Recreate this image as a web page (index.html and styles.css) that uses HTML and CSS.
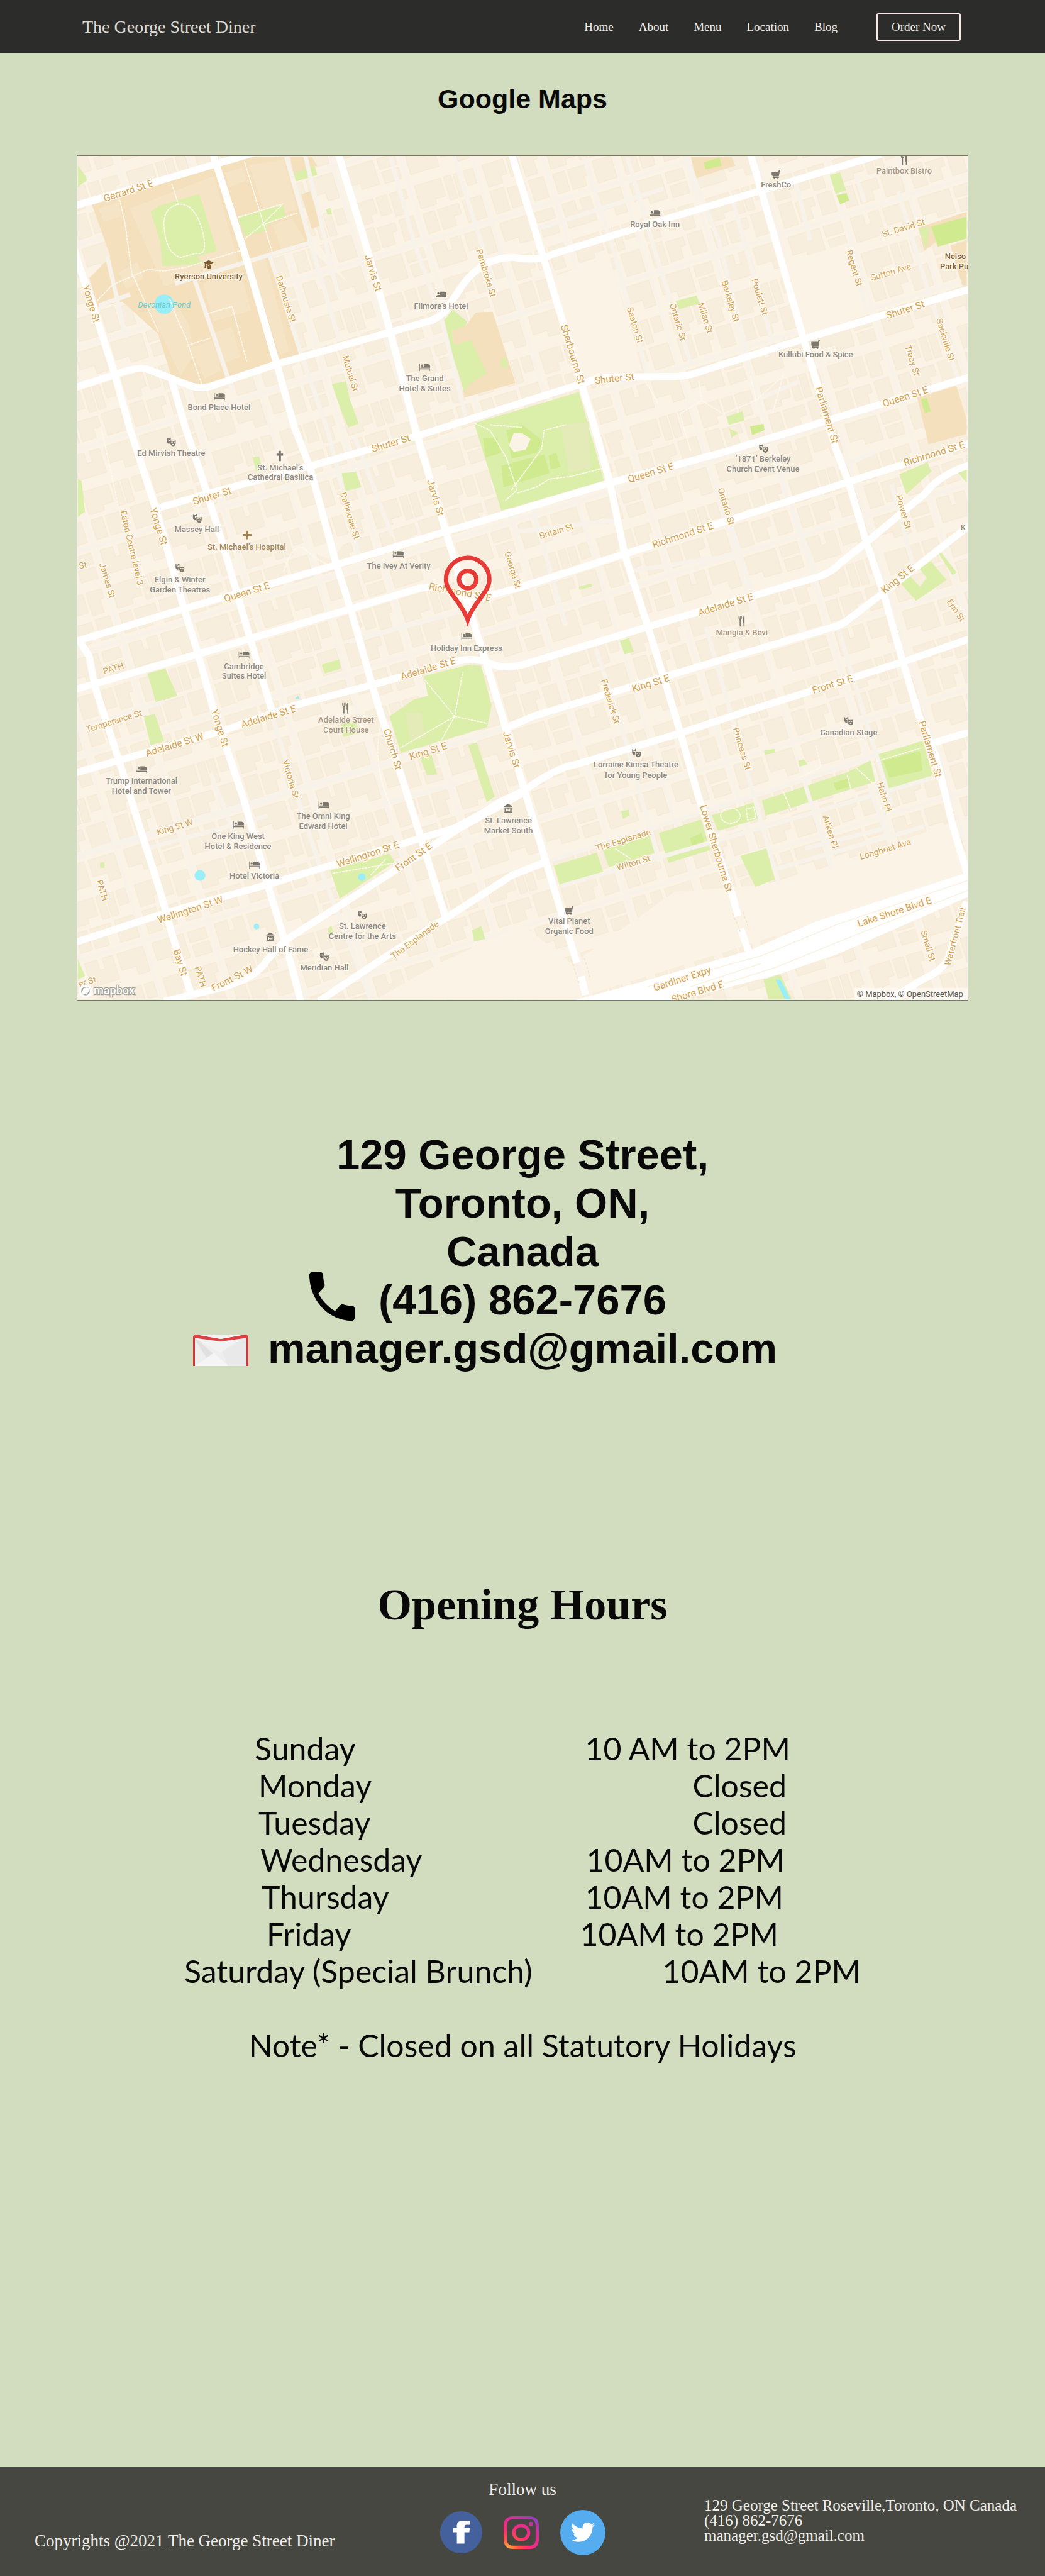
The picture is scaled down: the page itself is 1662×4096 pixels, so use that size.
FILE: index.html
```html
<!DOCTYPE html>
<html lang="en">
<head>
<meta charset="utf-8">
<meta name="viewport" content="width=device-width, initial-scale=1">
<title>Location - The George Street Diner</title>
<link rel="stylesheet" href="styles.css">
</head>
<body>
<header class="nav">
  <a class="nav__brand" href="#">The George Street Diner</a>
  <nav class="nav__links">
    <a href="#">Home</a>
    <a href="#">About</a>
    <a href="#">Menu</a>
    <a href="#">Location</a>
    <a href="#">Blog</a>
  </nav>
  <button class="nav__order" type="button">Order Now</button>
</header>

<main>
  <h1 class="title">Google Maps</h1>

  <div class="map">
  <svg class="map__canvas" viewBox="140 285 1640 1554" role="img" aria-label="Map of downtown Toronto">
    <defs>
      <pattern id="blocks" width="250" height="180" patternUnits="userSpaceOnUse" patternTransform="rotate(-17)">
        <g class="building">
          <path d="M8 8h40v28h-12v14h-28zM54 8h20v36h-20zM80 8h30v18h-8v26h-22zM8 58h26v44h-26zM40 62h34v16h-10v22h-24zM82 60h28v40h-28z"/>
          <path d="M128 8h50v34h-20v10h-30zM184 8h14v44h-14zM202 8h14v44h-14zM222 8h18v28h-18zM128 62h22v38h-22zM156 62h40v20h-14v18h-26zM204 60h36v42h-36z"/>
          <path d="M8 120h60v46h-34v-12h-26zM76 120h34v20h-34zM78 146h32v22h-32zM128 120h24v20h10v-20h20v46h-54zM190 120h50v48h-22v-16h-28z"/>
        </g>
        <path class="lane" d="M119 0v180M245 0v180M0 111h250"/>
      </pattern>
      <symbol id="bed" viewBox="0 0 20 14"><path d="M0 0h1v9h19v5h-1v-3h-18v3h-1zM3 4a2 2 0 1 1 4 0a2 2 0 1 1-4 0zM8 1h8l4 2v5h-17v-1h5z"/></symbol>
      <symbol id="masks" viewBox="0 0 20 18"><path fill-rule="evenodd" d="M1 1l2 1 3 0 3-2v5h-2v-1l-2 1v2h2v5l-2 1q-4-1-4-6zM3 4v2h1v-2zM8 6l3 1h5l3-1v6q-1 6-5 6t-6-6zM10 9v2h3v-2zM15 9v2h2v-2zM11 13q3 4 5 0z"/></symbol>
      <symbol id="cart" viewBox="0 0 18 18"><path d="M1 4h13l1-4h3v2h-1l-2 11h-10v1h10v2h-1v2h-2v-2h-5v2h-2v-2h-2v-4l-2-1z"/></symbol>
      <symbol id="fork" viewBox="0 0 14 20"><path d="M1 0v5l2 3v12h2v-12l2-3v-5h-1v5h-1v-5h-1v5h-1v-5zM9 20V3q1-3 3-3v20h-2v-7h-1z"/></symbol>
      <symbol id="museum" viewBox="0 0 18 18"><path fill-rule="evenodd" d="M9 0l8 5v1h-16v-1zM2 7h14v9h1v2h-16v-2h1zM5 9v6h2v-3l2 2 2-2v3h2v-6h-1l-3 3-3-3z"/></symbol>
      <symbol id="cap" viewBox="0 0 20 18"><path d="M10 0l10 5-10 5-6-3v5l1 4h-4l1-4v-6l-2-1zM5 9l5 3 5-3v7q-5 4-8 0z"/></symbol>
    </defs>

    <rect class="ground" x="140" y="285" width="1640" height="1554"/>
    <rect x="140" y="285" width="1640" height="1554" fill="url(#blocks)"/>

    <!-- open land without buildings -->
    <g class="ground">
      <path d="M1446 480L1560 445L1600 575L1480 620zM1240 1640L1430 1625L1760 1510L1780 1610L1080 1830L1070 1760z"/>
      <path d="M690 1838L810 1770L960 1700L1060 1780L1070 1838zM1010 510L1120 470L1180 680L1070 700z"/>
      <path d="M560 1010L640 985L610 1030zM470 300L550 440L640 520z"/>
    </g>

    <!-- campus and school grounds -->
    <g class="school">
      <path d="M167 375L458 287H521L568 450L500 470L551 653L368 708L313 690L289 613L223 553L178 563L162 510L201 470z"/>
      <path d="M532 287H572L582 303L538 317zM552 356L569 350L590 413L572 419z"/>
      <path d="M829 607L856 597L874 573L905 572L947 703L853 730z"/>
      <path d="M1270 287H1345L1352 303L1280 326zM1689 417L1778 388V400L1700 460zM1748 450L1778 440V523H1770z"/>
      <path d="M1687 730L1759 708L1778 770V797L1708 816z"/>
    </g>
    <g class="hall">
      <path d="M180 382L216 370L222 396L188 407zM236 382L392 322L436 480L300 525zM412 316L444 306L452 330L420 342zM456 302L520 292L545 384L488 398zM500 412L534 400L560 440L516 458zM458 480L486 470L530 645L512 652z"/>
      <path d="M270 560L315 545L345 595L355 650L330 690zM372 520L440 495L460 570L390 590zM388 612L425 600L440 655L400 670zM348 640L388 625L405 680L375 695zM216 500L250 480L262 510L230 530z"/>
    </g>

    <!-- parks -->
    <g class="park">
      <path d="M289 377L365 355L397 460L360 470L372 484L297 488L292 440L275 388zM436 398L519 373L524 397L487 412L490 423L448 432zM538 317L577 303L582 320L543 332zM598 384L606 380L609 392L601 393z"/>
      <path d="M141 302L156 323L158 330L141 342zM831 568L858 590L855 598L829 607L834 633L865 624L894 685L860 707L853 720L812 593z"/>
      <path d="M609 705L635 700L641 730L658 778L639 785L625 752zM921 660L930 655L933 675L921 675z"/>
      <path d="M871 777L1064 720L1110 883L950 930L921 938z"/>
      <path d="M778 1243L860 1222L884 1224L903 1297L895 1337L736 1384L715 1317L760 1286L786 1279z"/>
      <path d="M590 1222L622 1212L626 1229L596 1238zM269 1238L302 1229L324 1279L285 1292zM262 1317L283 1313L300 1363L275 1370zM627 869L654 867L663 895L634 902zM463 840L475 838L480 862L470 868zM141 880L148 884L154 940L141 950zM625 1331L654 1327L657 1348L630 1355z"/>
      <path d="M770 1391L792 1387L803 1424L784 1425zM860 1370L876 1365L909 1465L894 1475zM606 1601L715 1570L725 1585L623 1653zM867 1711L884 1703L891 1727L871 1732zM601 1708L608 1702L612 1720L604 1722zM141 1764L154 1795L141 1802zM182 1586H190V1596H182z"/>
      <path d="M1018 1592L1097 1568L1109 1605L1029 1630zM1108 1563L1199 1534L1208 1567L1119 1595zM1211 1532L1289 1507L1306 1563L1229 1587zM1309 1499L1388 1475L1394 1506L1320 1528zM1401 1472L1558 1420L1601 1398L1610 1437L1408 1500zM1608 1389L1697 1362L1716 1427L1629 1452z"/>
      <path d="M1361 1574L1411 1560L1428 1616L1389 1631zM1404 1802L1435 1792L1456 1838H1413zM1142 1492L1156 1489L1157 1499L1145 1506zM1405 1380L1424 1377L1425 1384L1406 1388zM1468 1399L1478 1396L1485 1405L1470 1410z"/>
      <path d="M1654 871L1706 849L1713 866L1667 908zM1657 1073L1674 1059L1692 1078L1705 1062L1691 1045L1712 1031L1741 1066L1685 1104zM1727 1018L1732 1016L1760 1052L1752 1057zM1139 1178L1156 1173L1165 1198L1148 1203zM1762 868L1778 859V887zM1064 1078L1088 1072V1078L1064 1084z"/>
      <path d="M1526 320L1545 315L1556 348L1537 355zM1690 418L1711 416L1703 456zM1242 552L1281 542L1286 557L1248 567zM1336 765L1365 755L1369 772L1340 780zM1341 787L1358 795L1345 804z"/>
    </g>
    <g class="pitch">
      <path d="M887 804L913 804L921 832L892 840zM921 855L1000 835L1010 869L925 895zM1008 837L1022 832L1030 858L1012 862zM940 842L930 790L960 780L1000 812L985 832z"/>
      <path d="M1294 297L1323 288L1327 303L1297 310zM1538 357L1557 353L1562 367L1545 374zM1713 415L1778 397V437L1725 452zM1694 733L1705 730L1712 755L1701 759zM1379 783L1404 778L1406 790L1383 799z"/>
      <path d="M1624 1399L1692 1381L1697 1417L1636 1430zM1269 1541L1290 1532L1297 1554L1274 1564zM1533 1440L1558 1432L1563 1446L1538 1453z"/>
    </g>
    <path class="ground" d="M935 818L944 795L960 796L975 806L966 826L944 830z"/>
    <path class="court" d="M1030 780L1082 774L1086 860L1046 868zM744 1310H773L781 1355L754 1363z"/>
    <g class="water">
      <circle cx="300" cy="558" r="18"/><circle cx="366" cy="1610" r="10"/><circle cx="664" cy="1613" r="7"/><circle cx="470" cy="1704" r="5"/>
      <path d="M1426 1802H1435L1454 1838H1443zM541 1285L546 1279L550 1285z"/>
    </g>

    <!-- side streets -->
    <g class="minor">
      <path d="M525 287L571 450L622 623M495 470L553 653L601 790L659 1021M834 287L892 470L910 530M717 287L760 443L813 593L855 763M1073 287L1127 457L1188 680M1153 287L1207 470L1271 670M1261 287L1320 437L1373 643M1346 363L1421 630M1464 337L1490 440M1561 450L1595 573M1574 320L1590 370M1652 350L1711 547M1716 560L1764 700"/>
      <path d="M1314 883L1357 1004L1384 1090M1432 870L1502 1055M1095 1193L1137 1317L1212 1585M1298 1152L1346 1320L1432 1627M1003 1585L1405 1458L1609 1389M1030 1630L1716 1430M1640 890L1680 1040M1540 1150L1640 1480M950 977L1140 955M1155 1050L1350 1020"/>
      <path d="M500 1320L548 1475L590 1603L680 1838M140 1572L448 1479L733 1396L924 1341M385 1420L440 1560M180 560L237 540M320 520L568 445M355 510L425 715M195 470L230 620M270 1560L490 1500M700 1480L840 1440M140 1340L300 1290M640 1180L860 1120M380 900L440 1100M560 285L620 540M650 800L720 985M980 940L1040 1150M985 420L1220 345"/>
      <path d="M1480 1560L1640 1520M1420 1600L1700 1520M1480 1440L1530 1600M1600 1450L1640 1560M1470 700L1400 730M1540 860L1610 830"/>
    </g>
    <g class="path">
      <path d="M314 336L326 374C350 370 366 400 372 430Q380 470 360 464L330 472Q305 465 300 420Q296 380 326 374M218 365L228 410L240 500L290 610M176 552L205 522L270 494L300 497L340 490L445 458M448 296L470 368L500 465M436 398L519 373L480 412L448 438M480 412L545 390M310 548L322 580L340 620L370 708M378 576L425 562L452 664M343 634L386 620"/>
      <path d="M871 777L900 790L930 840L950 900L928 920M950 906L985 895L1010 880L1050 875L1109 860M900 780L960 785M940 900L995 825L1000 790L1040 780M1180 690L1210 740M1250 760L1290 735L1330 760L1390 735L1440 690L1420 760M1250 760L1270 830M1290 735L1285 700M1390 735L1380 690"/>
      <path d="M780 1250L835 1317L850 1235M835 1317L735 1375M835 1317L895 1330M835 1317L810 1362M610 1606L720 1588M680 1610L708 1580M520 1050Q540 990 560 1010T610 1040M720 1490Q680 1400 700 1330M185 790L215 930L260 1050L290 1110M1500 1370L1510 1410L1470 1430"/>
      <path d="M1325 1500a18 14 0 1 0 36 0a18 14 0 1 0-36 0M1372 1488L1386 1484L1390 1504L1375 1508zM1440 1455L1455 1490M1558 1425L1565 1450M1575 1412L1605 1440M1612 1400L1695 1375M1130 1560L1160 1580"/>
    </g>

    <!-- main streets -->
    <g class="major">
      <path d="M134 455L146 495L164 547L209 687L236 785L283 930L336 1117L363 1204L395 1320L416 1379L448 1475L490 1625L524 1737L551 1840"/>
      <path d="M146 1181L162 1207L172 1262L190 1317L217 1399L262 1544L294 1644L315 1720L350 1830"/>
      <path d="M313 695L339 785L373 887L405 990L437 1100L458 1173L501 1315"/>
      <path d="M390 282L447 460L507 667L540 785L569 860L617 1037L643 1118L683 1259L700 1316L736 1424L773 1541L818 1687"/>
      <path d="M621 282L675 460L717 610L765 797L818 975L858 1107L892 1215L929 1338L966 1461L1003 1585L1038 1699L1060 1771M1068 1796L1076 1830"/>
      <path d="M940 282L998 470L1068 703L1093 785L1121 887L1148 1018L1191 1152L1220 1245L1250 1344L1285 1468L1346 1644L1357 1685M1362 1708L1377 1751"/>
      <path d="M1380 282L1400 350L1443 500L1478 623L1504 710L1536 821L1561 887L1593 995L1625 1090L1660 1214L1690 1315L1721 1389L1753 1520L1780 1610"/>
      <path d="M134 377L395 300L470 278"/>
      <path d="M134 712L209 688Q254 670 275 680L340 705Q368 718 395 706L508 668L715 610L795 587Q818 575 826 558L850 522Q890 470 945 472Q990 480 1015 466L1218 403L1405 347L1620 282"/>
      <path d="M283 935L384 906L569 856L765 801L950 742L1068 705Q1100 692 1130 692L1245 691Q1270 690 1300 678L1478 622L1784 530"/>
      <path d="M134 1180L336 1119L617 1038L818 977L950 938L1121 887L1325 832L1496 780L1784 692"/>
      <path d="M134 1268L363 1202L458 1174L643 1119L770 1081Q800 1075 830 1088T890 1097L960 1078L1148 1018L1352 952L1561 885L1784 814"/>
      <path d="M134 1422L217 1398L416 1341L543 1296L683 1259L834 1217Q860 1208 892 1216Q920 1232 960 1222L1191 1152L1378 1097L1505 1060Q1530 1052 1545 1035L1593 997L1700 908Q1730 870 1784 854"/>
      <path d="M924 1341L982 1316L1218 1245L1534 1152Q1550 1148 1561 1138L1620 1093L1784 965"/>
      <path d="M134 1734L299 1680L490 1627L770 1542L834 1523Q880 1500 920 1474L961 1455Q1020 1412 1057 1406L1250 1348L1378 1306L1660 1217L1784 1174"/>
      <path d="M300 1842L400 1818Q470 1800 490 1765L522 1730L770 1572L844 1523L961 1458"/>
      <path d="M585 1842L700 1765L818 1689L940 1610L1003 1585M1716 1366L1784 1346"/>
      <path d="M1778 1658L1745 1760Q1735 1785 1700 1800L1630 1842"/>
    </g>
    <path class="express" d="M1055 1840L1180 1806L1378 1748L1500 1695L1784 1603V1648L1540 1755L1432 1792L1240 1842z"/>
    <path class="median" d="M1190 1815L1400 1758L1540 1700L1784 1618M1230 1842L1430 1778L1560 1725L1784 1636M1270 1815L1400 1772"/>
    <path class="tunnel" d="M1050 1765L1064 1808M1074 1762L1085 1800M1347 1680L1362 1715M1366 1677L1378 1710"/>

    <!-- street names -->
    <g class="street street--main">
      <text transform="translate(236 355) rotate(-18)">Gerrard St E</text>
      <text transform="translate(160 559) rotate(73)">Yonge St</text>
      <text transform="translate(679 502) rotate(73)">Jarvis St</text>
      <text transform="translate(1047 652) rotate(73)">Sherbourne St</text>
      <text transform="translate(1130 701) rotate(-6)">Shuter St</text>
      <text transform="translate(1667 574) rotate(-18)">Shuter St</text>
      <text transform="translate(1667 734) rotate(-18)">Queen St E</text>
      <text transform="translate(1515 764) rotate(73)">Parliament St</text>
      <text transform="translate(719 820) rotate(-17)">Shuter St</text>
      <text transform="translate(390 917) rotate(-17)">Shuter St</text>
      <text transform="translate(284 969) rotate(73)">Yonge St</text>
      <text transform="translate(794 916) rotate(73)">Jarvis St</text>
      <text transform="translate(454 1094) rotate(-17)">Queen St E</text>
      <text transform="translate(844 1094) rotate(11)">Richmond St E</text>
      <text transform="translate(788 1235) rotate(-17)">Adelaide St E</text>
      <text transform="translate(494 1323) rotate(-17)">Adelaide St E</text>
      <text transform="translate(397 1340) rotate(73)">Yonge St</text>
      <text transform="translate(1198 874) rotate(-17)">Queen St E</text>
      <text transform="translate(1257 989) rotate(-18)">Richmond St E</text>
      <text transform="translate(1720 839) rotate(-17)">Richmond St E</text>
      <text transform="translate(1655 1069) rotate(-39)">King St E</text>
      <text transform="translate(1336 1117) rotate(-17)">Adelaide St E</text>
      <text transform="translate(1198 1262) rotate(-17)">King St E</text>
      <text transform="translate(1533 1264) rotate(-17)">Front St E</text>
      <text transform="translate(321 1375) rotate(-17)">Adelaide St W</text>
      <text transform="translate(715 1379) rotate(73)">Church St</text>
      <text transform="translate(788 1387) rotate(-17)">King St E</text>
      <text transform="translate(934 1380) rotate(73)">Jarvis St</text>
      <text transform="translate(677 1577) rotate(-18)">Wellington St E</text>
      <text transform="translate(763 1581) rotate(-35)">Front St E</text>
      <text transform="translate(350 1679) rotate(-18)">Wellington St W</text>
      <text transform="translate(324 1772) rotate(73)">Bay St</text>
      <text transform="translate(428 1805) rotate(-27)">Front St W</text>
      <text transform="translate(1311 1562) rotate(73)">Lower Sherbourne St</text>
      <text transform="translate(1705 1379) rotate(73)">Parliament St</text>
      <text transform="translate(1647 1683) rotate(-18)">Lake Shore Blvd E</text>
      <text transform="translate(1256 1806) rotate(-18)">Gardiner Expy</text>
      <text transform="translate(1284 1830) rotate(-17)">Shore Blvd E</text>
    </g>
    <g class="street">
      <text transform="translate(519 550) rotate(73)">Dalhousie St</text>
      <text transform="translate(888 502) rotate(73)">Pembroke St</text>
      <text transform="translate(638 687) rotate(73)">Mutual St</text>
      <text transform="translate(1162 598) rotate(73)">Seaton St</text>
      <text transform="translate(1241 592) rotate(73)">Ontario St</text>
      <text transform="translate(1292 585) rotate(73)">Milan St</text>
      <text transform="translate(1338 554) rotate(73)">Berkeley St</text>
      <text transform="translate(1392 546) rotate(73)">Poulett St</text>
      <text transform="translate(1566 493) rotate(73)">Regent St</text>
      <text transform="translate(1663 423) rotate(-17)">St. David St</text>
      <text transform="translate(1640 504) rotate(-17)">Sutton Ave</text>
      <text transform="translate(1734 625) rotate(73)">Sackville St</text>
      <text transform="translate(1673 663) rotate(73)">Tracy St</text>
      <text transform="translate(235 1008) rotate(77)">Eaton Centre level 3</text>
      <text transform="translate(190 1068) rotate(73)">James St</text>
      <text transform="translate(151 1044) rotate(-10)">St</text>
      <text transform="translate(637 949) rotate(73)">Dalhousie St</text>
      <text transform="translate(937 1049) rotate(73)">George St</text>
      <text transform="translate(208 1234) rotate(-17)">PATH</text>
      <text transform="translate(209 1331) rotate(-17)">Temperance St</text>
      <text transform="translate(1024 981) rotate(-17)">Britain St</text>
      <text transform="translate(1330 932) rotate(73)">Ontario St</text>
      <text transform="translate(1657 942) rotate(73)">Power St</text>
      <text transform="translate(1754 1125) rotate(55)">Erin St</text>
      <text transform="translate(1117 1291) rotate(73)">Frederick St</text>
      <text transform="translate(321 1526) rotate(-17)">King St W</text>
      <text transform="translate(528 1434) rotate(73)">Victoria St</text>
      <text transform="translate(181 1639) rotate(73)">PATH</text>
      <text transform="translate(362 1798) rotate(73)">PATH</text>
      <text transform="translate(765 1733) rotate(-37)">The Esplanade</text>
      <text transform="translate(160 1811) rotate(-17)">er St</text>
      <text transform="translate(1359 1378) rotate(73)">Princess St</text>
      <text transform="translate(1621 1467) rotate(73)">Hahn Pl</text>
      <text transform="translate(1522 1531) rotate(73)">Aitken Pl</text>
      <text transform="translate(1630 1567) rotate(-17)">Longboat Ave</text>
      <text transform="translate(1147 1550) rotate(-17)">The Esplanade</text>
      <text transform="translate(1166 1592) rotate(-17)">Wilton St</text>
      <text transform="translate(1702 1741) rotate(73)">Small St</text>
      <text transform="translate(1762 1724) rotate(-75)">Waterfront Trail</text>
    </g>

    <!-- places -->
    <g class="place place--school">
      <use href="#cap" x="373" y="477" width="18" height="16"/><text x="382" y="512">Ryerson University</text>
      <text class="place__start" x="1738" y="475">Nelso</text><text class="place__start" x="1729" y="493">Park Pu</text>
    </g>
    <text class="place place--water" x="300" y="564">Devonian Pond</text>
    <g class="place place--health">
      <path d="M451 975h4v6h6v4h-6v6h-4v-6h-6v-4h6z"/><text x="452" y="1010">St. Michael’s Hospital</text>
    </g>
    <g class="place place--food">
      <use href="#fork" x="1656" y="282" width="14" height="20"/><text x="1663" y="317">Paintbox Bistro</text>
      <use href="#fork" x="1357" y="1132" width="14" height="20"/><text x="1364" y="1168">Mangia &amp; Bevi</text>
      <use href="#fork" x="627" y="1292" width="14" height="20"/><text x="635" y="1328">Adelaide Street</text><text x="635" y="1347">Court House</text>
    </g>
    <g class="place">
      <use href="#bed" x="800" y="534" width="20" height="14"/><text x="810" y="567">Filmore’s Hotel</text>
      <use href="#bed" x="770" y="667" width="20" height="14"/><text x="780" y="700">The Grand</text><text x="780" y="718">Hotel &amp; Suites</text>
      <use href="#bed" x="392" y="721" width="20" height="14"/><text x="401" y="753">Bond Place Hotel</text>
      <use href="#cart" x="1418" y="310" width="17" height="18"/><text x="1427" y="343">FreshCo</text>
      <use href="#bed" x="1194" y="384" width="20" height="14"/><text x="1204" y="416">Royal Oak Inn</text>
      <use href="#cart" x="1491" y="623" width="17" height="18"/><text x="1500" y="656">Kullubi Food &amp; Spice</text>
      <use href="#masks" x="304" y="803" width="18" height="17"/><text x="313" y="838">Ed Mirvish Theatre</text>
      <path d="M511 828h4v5h4v4h-4v10h-4v-10h-4v-4h4z"/><text x="514" y="864">St. Michael’s</text><text x="514" y="882">Cathedral Basilica</text>
      <use href="#masks" x="352" y="944" width="18" height="17"/><text x="360" y="978">Massey Hall</text>
      <use href="#masks" x="320" y="1035" width="18" height="17"/><text x="329" y="1070">Elgin &amp; Winter</text><text x="329" y="1089">Garden Theatres</text>
      <use href="#bed" x="721" y="1012" width="20" height="14"/><text x="732" y="1045">The Ivey At Verity</text>
      <use href="#bed" x="847" y="1163" width="20" height="14"/><text x="857" y="1197">Holiday Inn Express</text>
      <use href="#bed" x="437" y="1197" width="20" height="14"/><text x="447" y="1230">Cambridge</text><text x="447" y="1248">Suites Hotel</text>
      <use href="#masks" x="1395" y="815" width="18" height="17"/><text x="1403" y="848">‘1871’ Berkeley</text><text x="1403" y="867">Church Event Venue</text>
      <use href="#bed" x="248" y="1408" width="20" height="14"/><text x="258" y="1441">Trump International</text><text x="258" y="1460">Hotel and Tower</text>
      <use href="#bed" x="427" y="1510" width="20" height="14"/><text x="436" y="1543">One King West</text><text x="436" y="1561">Hotel &amp; Residence</text>
      <use href="#bed" x="584" y="1474" width="20" height="14"/><text x="593" y="1506">The Omni King</text><text x="593" y="1524">Edward Hotel</text>
      <use href="#bed" x="456" y="1584" width="20" height="14"/><text x="466" y="1616">Hotel Victoria</text>
      <use href="#museum" x="925" y="1478" width="17" height="17"/><text x="934" y="1514">St. Lawrence</text><text x="934" y="1532">Market South</text>
      <use href="#masks" x="656" y="1674" width="18" height="17"/><text x="665" y="1708">St. Lawrence</text><text x="665" y="1727">Centre for the Arts</text>
      <use href="#museum" x="487" y="1715" width="17" height="17"/><text x="496" y="1751">Hockey Hall of Fame</text>
      <use href="#masks" x="586" y="1751" width="18" height="17"/><text x="595" y="1785">Meridian Hall</text>
      <use href="#masks" x="1161" y="1376" width="18" height="17"/><text x="1169" y="1411">Lorraine Kimsa Theatre</text><text x="1169" y="1430">for Young People</text>
      <use href="#masks" x="1552" y="1317" width="18" height="17"/><text x="1561" y="1352">Canadian Stage</text>
      <use href="#cart" x="1037" y="1665" width="17" height="18"/><text x="1046" y="1699">Vital Planet</text><text x="1046" y="1718">Organic Food</text>
      <text class="place__start" x="1767" y="974">K</text>
    </g>

    <!-- pin -->
    <g class="pin">
      <path d="M859 1139C849 1108 819 1088 819 1065a40 40 0 0 1 80 0C899 1088 869 1108 859 1139z"/>
      <circle cx="859" cy="1065" r="16"/>
    </g>

    <!-- attribution -->
    <circle class="logo-ring" cx="155" cy="1823" r="10"/>
    <path class="logo-drop" d="M149 1829q-1-12 8-13 7 2 4 8-4 6-12 5z"/>
    <text class="logo-text" x="170" y="1829">mapbox</text>
    <rect class="credit-bg" x="1572" y="1817" width="210" height="24"/>
    <text class="credit" x="1576" y="1833">© Mapbox, © OpenStreetMap</text>
  </svg>
  </div>

  <address class="contact">
    <span>129 George Street,</span>
    <span>Toronto, ON,</span>
    <span>Canada</span>
    <span class="contact__row">
      <svg class="contact__phone" viewBox="3 3 18 18" preserveAspectRatio="none" aria-hidden="true"><path d="M20 15.500c-1.250 0-2.450-.2-3.570-.57-.35-.11-.74-.03-1.020.24l-2.200 2.200c-2.830-1.440-5.150-3.750-6.590-6.590l2.200-2.210c.28-.26.36-.65.25-1C8.700 6.450 8.500 5.250 8.500 4c0-.55-.45-1-1-1H4c-.55 0-1 .45-1 1 0 9.390 7.610 17 17 17 .55 0 1-.45 1-1v-3.500c0-.55-.45-1-1-1z"/></svg>
      <span>(416) 862-7676</span>
    </span>
    <span class="contact__row">
      <svg class="contact__mail" viewBox="0 0 88 50" aria-hidden="true">
        <path fill="#d63535" d="M3 0h82l3 4v46H0V4z"/>
        <path fill="#eee" d="M3 5h82v45H3z"/>
        <path fill="#e0e0e0" d="M3 5l52 45H30L3 8z"/>
        <path fill="#e9e9e9" d="M46 27L85 5v45H56z"/>
        <path fill="#f5f5f5" d="M3 50l30-21 23 21z"/>
        <path fill="#f2f2f2" d="M5 0h78L44 29 3 6z"/>
        <path fill="#dc4040" d="M0 5q0-4 5-5l39 7L83 0q5 1 5 5L44 11z"/>
        <path fill="#f4f4f4" d="M6 0h76L44 7z"/>
      </svg>
      <span>manager.gsd@gmail.com</span>
    </span>
  </address>

  <section class="hours">
    <h2 class="hours__title">Opening Hours</h2>
    <table class="hours__table">
      <tbody>
        <tr class="row-sun"><th scope="row">Sunday</th><td>10 AM to 2PM</td></tr>
        <tr class="row-mon"><th scope="row">Monday</th><td>Closed</td></tr>
        <tr class="row-mon"><th scope="row">Tuesday</th><td>Closed</td></tr>
        <tr class="row-wed"><th scope="row">Wednesday</th><td>10AM to 2PM</td></tr>
        <tr class="row-thu"><th scope="row">Thursday</th><td>10AM to 2PM</td></tr>
        <tr class="row-fri"><th scope="row">Friday</th><td>10AM to 2PM</td></tr>
        <tr class="row-sat"><th scope="row">Saturday (Special Brunch)</th><td>10AM to 2PM</td></tr>
      </tbody>
    </table>
    <p class="hours__note">Note* - Closed on all Statutory Holidays</p>
  </section>
</main>

<footer class="footer">
  <p class="footer__copy">Copyrights @2021 The George Street Diner</p>
  <div class="footer__social">
    <p>Follow us</p>
    <div class="footer__icons">
      <a href="#" aria-label="Facebook"><svg class="icon-fb" viewBox="0 0 78 78"><circle cx="39" cy="39" r="39" fill="#45619d"/><path fill="#fff" d="M31 60V39h-7v-8h7v-5q0-8 9-8h15v7h-6q-4 0-4 4v2h10l-1 8h-9v21z"/></svg></a>
      <a href="#" aria-label="Instagram"><svg class="icon-ig" viewBox="0 0 66 60" preserveAspectRatio="none">
        <defs>
          <radialGradient id="ig" cx="12%" cy="100%" r="120%"><stop offset="0" stop-color="#ffb13d"/><stop offset=".25" stop-color="#ff5548"/><stop offset=".5" stop-color="#ff2b78"/><stop offset=".75" stop-color="#e02d92"/><stop offset="1" stop-color="#9340bb"/></radialGradient>
        </defs>
        <path fill="url(#ig)" fill-rule="evenodd" d="M18 0H48Q66 0 66 18V42Q66 60 48 60H18Q0 60 0 42V18Q0 0 18 0zM19 5Q6 5 6 18V42Q6 54 19 54H47Q60 54 60 42V18Q60 5 47 5zM33 14a17 16 0 1 1 0 32a17 16 0 1 1 0-32zM33 20a11 10 0 1 0 0 20a11 10 0 1 0 0-20zM51 10a4 4 0 1 1 0 8a4 4 0 1 1 0-8z"/></svg></a>
      <a href="#" aria-label="Twitter"><svg class="icon-tw" viewBox="0 0 84 84"><circle cx="42" cy="42" r="42" fill="#55acee"/><path fill="#fff" transform="translate(20 19) scale(1.850)" d="M23.950 4.570a10 10 0 0 1-2.820.77 4.960 4.960 0 0 0 2.160-2.720c-.95.55-2 .96-3.130 1.180a4.920 4.920 0 0 0-8.380 4.480C7.690 8.090 4.070 6.130 1.640 3.160a4.920 4.920 0 0 0 1.520 6.570 4.900 4.900 0 0 1-2.230-.61v.06a4.920 4.920 0 0 0 3.950 4.830 5 5 0 0 1-2.210.08 4.940 4.940 0 0 0 4.600 3.420A9.870 9.870 0 0 1 0 19.540a14 14 0 0 0 7.550 2.210c9.050 0 14-7.500 14-13.980 0-.21 0-.42-.02-.63a9.940 9.940 0 0 0 2.460-2.550z"/></svg></a>
    </div>
  </div>
  <address class="footer__address">129 George Street Roseville,Toronto, ON Canada<br>(416) 862-7676<br>manager.gsd@gmail.com</address>
</footer>
</body>
</html>
```

FILE: styles.css
```css
* { box-sizing: border-box; }

body {
  margin: 0;
  background: #d2ddbf;
  color: #090909;
  font-family: "Liberation Serif", serif;
}

a { color: inherit; text-decoration: none; }

p, h1, h2 { margin: 0; }

/* top bar */
.nav {
  display: flex;
  align-items: center;
  height: 85px;
  padding: 0 134px 0 131px;
  background: #2c2c2a;
  color: #f1ece6;
  font-size: 19px;
}

.nav__brand {
  margin-right: auto;
  font-size: 28px;
  color: #dedad2;
}

.nav__links {
  display: flex;
  gap: 40px;
  margin-right: 62px;
}

.nav__order {
  width: 134px;
  height: 44px;
  border: 2px solid #fbe9e6;
  border-radius: 3px;
  background: none;
  color: inherit;
  font: inherit;
}

.title {
  margin: 48px 0 65px;
  text-align: center;
  font: bold 43px/49px "Liberation Sans", sans-serif;
}

/* map */
.map { padding: 0 122px; }

.map__canvas {
  display: block;
  width: 100%;
  border: 1px solid #74776f;
  font-family: Roboto, sans-serif;
}

.ground { fill: #fbf3e6; }
.building { fill: #f8eedd; stroke: #f5e7cf; stroke-width: 1; }
.lane { fill: none; stroke: #f8f2e9; stroke-width: 6; }
.school { fill: #f5e0bd; }
.hall { fill: #f5e4c6; }
.park { fill: #dbeeaa; }
.pitch { fill: #d0eb8f; }
.court { fill: #e4ebb8; }
.water { fill: #99eef8; }
.minor { fill: none; stroke: #f7f2ea; stroke-width: 8; }
.path { fill: none; stroke: #fdf9ef; stroke-width: 2; stroke-dasharray: 5 1; }
.major { fill: none; stroke: #fff; stroke-width: 13; stroke-linejoin: round; }
.express { fill: #fff; }
.median { fill: none; stroke: #fbf3e2; stroke-width: 2; }
.tunnel { fill: none; stroke: #f3e6cf; stroke-width: 2; stroke-dasharray: 5 3; }

.street {
  fill: #d4a456;
  font-size: 16px;
  text-anchor: middle;
  stroke: #fffaf2;
  stroke-width: 3px;
  paint-order: stroke;
}

.street--main { font-size: 18px; }

.place {
  fill: #7d786e;
  font-size: 15px;
  font-weight: 500;
  text-anchor: middle;
}

.place text {
  fill: #8d8981;
  stroke: #fffaf2;
  stroke-width: 2px;
  paint-order: stroke;
}

.place__start { text-anchor: start; }
.place--school, .place--school text { fill: #7c5c30; }
.place--health, .place--health text { fill: #a38452; }
.place--food text { fill: #a8957d; }
.place--water { fill: #68ccd0; font-style: italic; font-weight: 400; }

.pin { fill: none; stroke: #e53a35; stroke-width: 8; }

.logo-ring { fill: #a9a9a0; stroke: #fff; stroke-width: 4; }
.logo-drop { fill: #fff; }
.logo-text {
  fill: #fff;
  stroke: #a5a398;
  stroke-width: 3px;
  paint-order: stroke;
  font-size: 21px;
  font-weight: 500;
}
.credit-bg { fill: #fff; fill-opacity: .5; }
.credit { fill: #58554f; font: 15px "Noto Sans", sans-serif; font-family: Roboto, sans-serif; }

/* contact block */
.contact {
  display: flex;
  flex-direction: column;
  margin-top: 206px;
  text-align: center;
  font: bold 67px/77px "Liberation Sans", sans-serif;
}

.contact__row {
  display: grid;
  grid-template-columns: 1fr auto 1fr;
  grid-template-rows: 77px;
  align-items: end;
}

.contact__phone {
  justify-self: end;
  width: 72px;
  height: 77px;
  margin: 0 38px 5px 0;
}

.contact__mail {
  justify-self: end;
  width: 88px;
  height: 50px;
  margin: 0 31px 10px 0;
}

/* opening hours */
.hours {
  margin-top: 330px;
  padding-bottom: 641px;
  font: 50px/59px Lato, sans-serif;
}

.hours__title {
  margin-bottom: 160px;
  text-align: center;
  font: bold 70px/79px "Liberation Serif", serif;
}

.hours__table, .hours__table tbody { display: block; }

.hours__table tr {
  display: flex;
  justify-content: space-between;
  margin: 0 auto;
}

.hours__table th, .hours__table td {
  padding: 0;
  font-weight: inherit;
}

.row-sun { width: 852px; }
.row-mon { width: 840px; }
.row-wed { width: 834px; }
.row-thu { width: 830px; }
.row-fri { width: 814px; }
.row-sat { width: 1076px; }

.hours__note {
  margin-top: 59px;
  text-align: center;
}

/* footer */
.footer {
  display: grid;
  grid-template-columns: 1fr auto 1fr;
  min-height: 173px;
  padding: 0 45px;
  background: #464741;
  color: #f0eee9;
  font-size: 27px;
  line-height: 30px;
}

.footer__copy { margin-top: 102px; padding-left: 10px; }

.footer__social { padding-top: 20px; text-align: center; }

.footer__icons {
  display: flex;
  align-items: center;
  gap: 34px;
  margin-top: 17px;
}

.footer__icons svg { display: block; }
.icon-fb { width: 67px; height: 67px; }
.icon-ig { width: 56px; height: 52px; }
.icon-tw { width: 72px; height: 74px; }

.footer__address {
  justify-self: end;
  margin-top: 49px;
  font-size: 25px;
  line-height: 24px;
  font-style: normal;
}
```
